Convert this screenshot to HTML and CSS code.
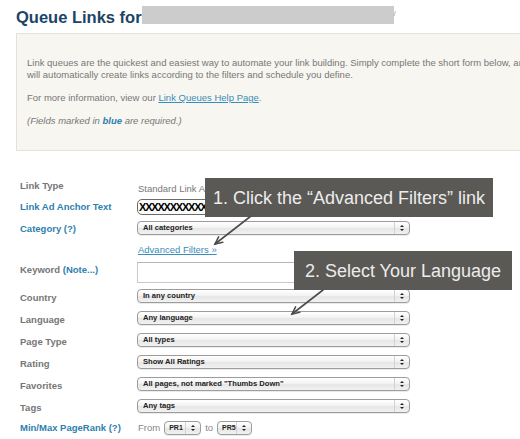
FILE: index.html
```html
<!DOCTYPE html>
<html>
<head>
<meta charset="utf-8">
<link rel="stylesheet" href="styles.css">
</head>
<body>
<div class="page">
  <h1 class="title"><span class="title-text">Queue Links for</span><span class="redact"></span><span class="slash">/</span></h1>
  <div class="info">
    <p class="nowrap">Link queues are the quickest and easiest way to automate your link building. Simply complete the short form below, and we<br>will automatically create links according to the filters and schedule you define.</p>
    <p>For more information, view our <a class="link" href="#">Link Queues Help Page</a>.</p>
    <p class="ital">(Fields marked in <b class="blue">blue</b> are required.)</p>
  </div>
  <div class="form">
    <div class="row r-type"><div class="label">Link Type</div><div class="ctrl"><span class="value">Standard Link Ad</span></div></div>
    <div class="row"><div class="label req">Link Ad Anchor Text</div><div class="ctrl"><div class="anchor">XXXXXXXXXXXX</div></div></div>
    <div class="row"><div class="label req">Category (?)</div><div class="ctrl"><div class="select"><span class="txt">All categories</span><span class="arr"><i class="up"></i><i class="dn"></i></span></div></div></div>
    <div class="row r-adv"><div class="label"></div><div class="ctrl"><a class="link" href="#">Advanced Filters »</a></div></div>
    <div class="row r-kw"><div class="label">Keyword <span class="req">(Note...)</span></div><div class="ctrl"><div class="kw"></div></div></div>
    <div class="row"><div class="label">Country</div><div class="ctrl"><div class="select"><span class="txt">In any country</span><span class="arr"><i class="up"></i><i class="dn"></i></span></div></div></div>
    <div class="row"><div class="label">Language</div><div class="ctrl"><div class="select"><span class="txt">Any language</span><span class="arr"><i class="up"></i><i class="dn"></i></span></div></div></div>
    <div class="row"><div class="label">Page Type</div><div class="ctrl"><div class="select"><span class="txt">All types</span><span class="arr"><i class="up"></i><i class="dn"></i></span></div></div></div>
    <div class="row"><div class="label">Rating</div><div class="ctrl"><div class="select"><span class="txt">Show All Ratings</span><span class="arr"><i class="up"></i><i class="dn"></i></span></div></div></div>
    <div class="row"><div class="label">Favorites</div><div class="ctrl"><div class="select"><span class="txt">All pages, not marked "Thumbs Down"</span><span class="arr"><i class="up"></i><i class="dn"></i></span></div></div></div>
    <div class="row"><div class="label">Tags</div><div class="ctrl"><div class="select"><span class="txt">Any tags</span><span class="arr"><i class="up"></i><i class="dn"></i></span></div></div></div>
    <div class="row r-pr"><div class="label req">Min/Max PageRank (?)</div><div class="ctrl pr-ctrl"><span class="small-txt">From</span><div class="select pr pr1"><span class="txt">PR1</span><span class="arr"><i class="up"></i><i class="dn"></i></span></div><span class="small-txt">to</span><div class="select pr pr5"><span class="txt">PR5</span><span class="arr"><i class="up"></i><i class="dn"></i></span></div></div></div>
  </div>
</div>

<div class="callout c1">1. Click the “Advanced Filters” link</div>
<div class="callout c2">2. Select Your Language</div>

<svg class="arrows" width="520" height="439" viewBox="0 0 520 439">
  <g stroke="#4d4d4b" stroke-width="1.6" fill="none" stroke-linecap="round">
    <line x1="251" y1="216" x2="215" y2="244"/>
    <polyline points="222.8,242.2 215,244 218.6,236.9"/>
    <line x1="323" y1="290" x2="292" y2="314"/>
    <polyline points="299.8,312.2 292,314 295.6,306.9"/>
  </g>
</svg>
</body>
</html>
```

FILE: styles.css
```css
html, body {
  margin: 0;
  padding: 0;
}
body {
  width: 520px;
  height: 439px;
  overflow: hidden;
  position: relative;
  background: #ffffff;
  font-family: "Liberation Sans", Arial, sans-serif;
}
.page {
  padding-left: 16px;
}
.title {
  margin: 0;
  padding-top: 6.5px;
  display: flex;
  align-items: flex-start;
  font-size: 16.5px;
  line-height: 20px;
  font-weight: bold;
  color: #1b4466;
}
.title-text {
  white-space: nowrap;
}
.redact {
  display: inline-block;
  width: 252px;
  height: 18px;
  margin-top: -0.5px;
  margin-left: 0;
  background: #cccccc;
}
.slash {
  font-size: 8px;
  line-height: 10px;
  font-weight: normal;
  color: #999;
  margin-top: 2px;
}
.info {
  margin-top: 6.5px;
  width: 560px;
  box-sizing: border-box;
  background: #f7f6f0;
  border: 1px solid #e3e2dc;
  padding: 23px 0 23px 10px;
  font-size: 9.5px;
  line-height: 12px;
  color: #777;
}
.info p {
  margin: 0 0 11px 0;
}
.info p:last-child {
  margin-bottom: 0;
}
.nowrap {
  white-space: nowrap;
}
.ital {
  font-style: italic;
}
.blue {
  color: #2f80ad;
}
.link {
  color: #3b8cb8;
  text-decoration: underline;
}
.form {
  margin-top: 26px;
  padding-left: 4px;
}
.row {
  display: flex;
  height: 22px;
}
.label {
  width: 118px;
  flex: none;
  box-sizing: border-box;
  padding-top: 6px;
  line-height: 12px;
  font-size: 9.5px;
  font-weight: bold;
  color: #767676;
  white-space: nowrap;
}
.label.req,
.label .req {
  color: #2f7fae;
}
.row:nth-child(2) .label,
.row:nth-child(3) .label {
  padding-top: 5px;
}
.ctrl {
  padding-top: 3px;
  margin-left: -1px;
}
.r-type {
  height: 19px;
}
.r-type .label {
  padding-top: 3px;
}
.r-type .ctrl {
  padding-top: 1px;
  margin-left: 0;
}
.value {
  font-size: 9.5px;
  line-height: 12px;
  color: #777;
  white-space: nowrap;
}
.anchor {
  width: 258px;
  height: 16px;
  box-sizing: border-box;
  border: 1px solid #6a6a6a;
  border-radius: 5px;
  background: #fafafa;
  padding-left: 1px;
  font-size: 11px;
  line-height: 14px;
  font-weight: bold;
  color: #000;
  letter-spacing: -1.2px;
  overflow: hidden;
  white-space: nowrap;
}
.r-adv {
  height: 18px;
}
.r-adv .ctrl {
  padding-top: 4px;
  margin-left: 0;
  font-size: 9.5px;
  line-height: 12px;
}
.r-kw {
  height: 28px;
}
.r-kw .ctrl {
  padding-top: 4px;
}
.kw {
  width: 273px;
  height: 21px;
  box-sizing: border-box;
  border: 1px solid #c9c9c9;
  border-top-color: #b5b5b5;
  background: #fff;
}
.select {
  width: 273px;
  height: 14px;
  box-sizing: border-box;
  display: flex;
  border: 1px solid #9c9c9c;
  border-radius: 4px;
  background: linear-gradient(#ffffff 0%, #f3f3f3 45%, #e6e6e6 55%, #f2f2f2 100%);
  box-shadow: 0 1px 0 rgba(0,0,0,0.08);
}
.select .txt {
  flex: 1;
  padding-left: 5px;
  font-size: 7.6px;
  line-height: 12px;
  font-weight: bold;
  color: #222;
  white-space: nowrap;
  overflow: hidden;
}
.select .arr {
  width: 14px;
  flex: none;
  border-left: 1px solid #d2d2d2;
  display: flex;
  flex-direction: column;
  align-items: center;
  justify-content: center;
  gap: 2px;
}
.up, .dn {
  display: block;
  width: 0;
  height: 0;
  border-left: 2px solid transparent;
  border-right: 2px solid transparent;
}
.up {
  border-bottom: 2.5px solid #222;
}
.dn {
  border-top: 2.5px solid #222;
}
.r-pr .label {
  padding-top: 4px;
}
.pr-ctrl {
  display: flex;
  align-items: flex-start;
  margin-left: 0;
}
.small-txt {
  font-size: 9.5px;
  line-height: 14px;
  color: #888;
  white-space: nowrap;
}
.pr {
  margin: 0 4px;
}
.pr1 {
  width: 37px;
}
.pr5 {
  width: 35px;
}
.pr .txt {
  padding-left: 4px;
  font-size: 7px;
  overflow: visible;
}
.callout {
  position: absolute;
  background: #5a5955;
  color: #ececec;
  font-size: 18px;
  line-height: 22px;
  display: flex;
  align-items: center;
  justify-content: center;
  white-space: nowrap;
  z-index: 2;
}
.c1 {
  left: 205px;
  top: 178px;
  width: 288px;
  height: 39px;
}
.c2 {
  left: 294px;
  top: 251px;
  width: 218px;
  height: 39px;
}
.arrows {
  position: absolute;
  left: 0;
  top: 0;
  z-index: 3;
  pointer-events: none;
}
```
